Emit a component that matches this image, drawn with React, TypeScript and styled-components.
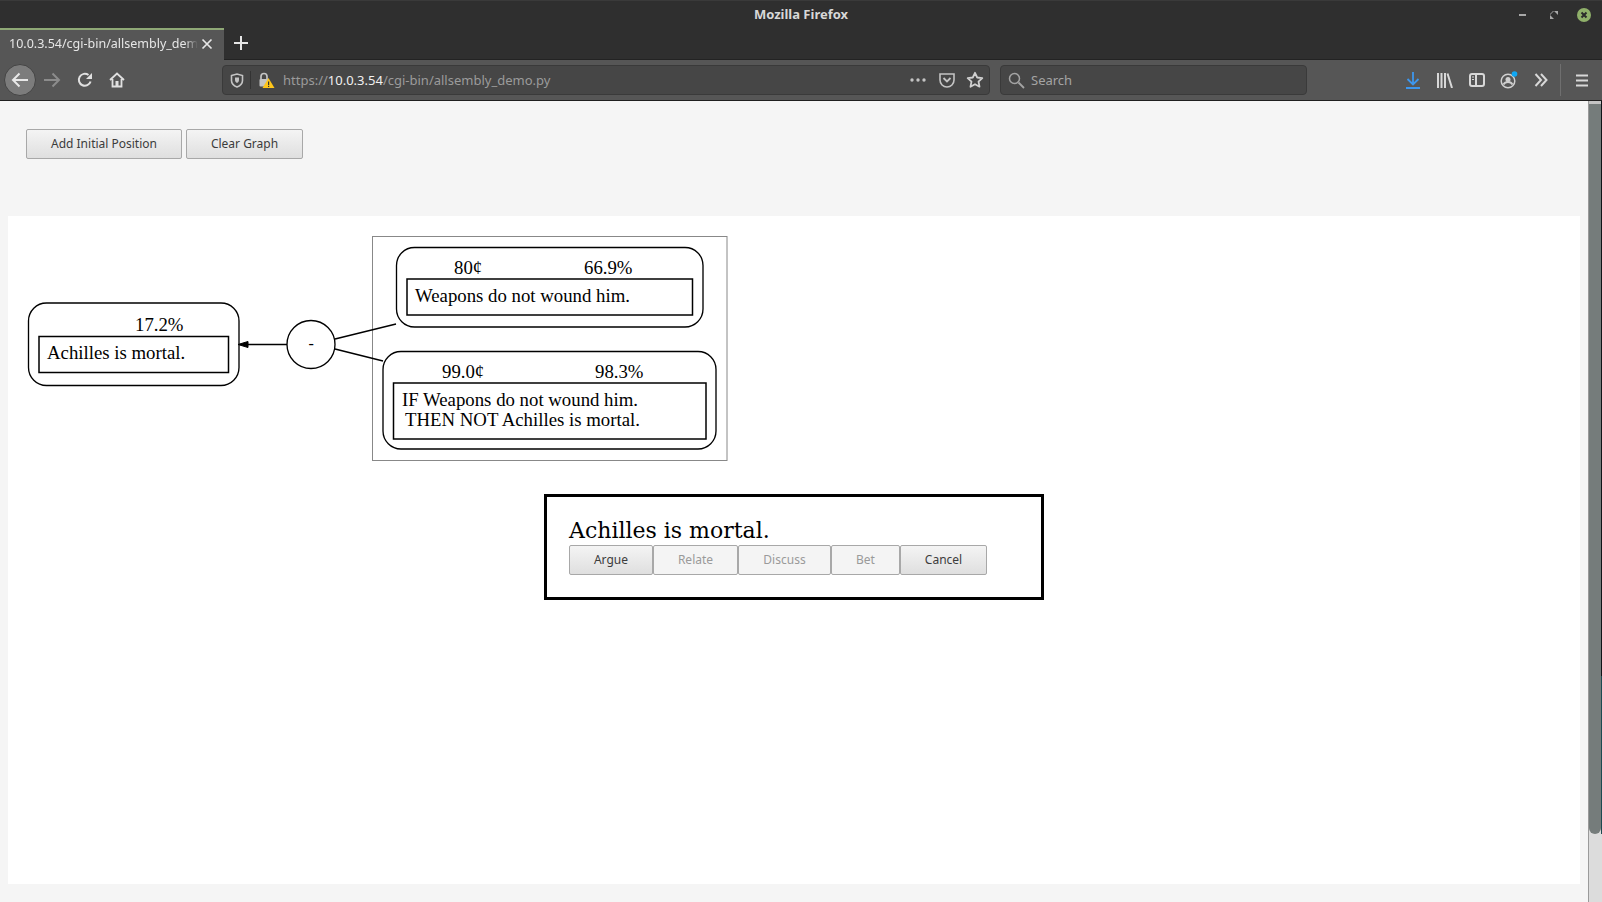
import React from "react";
import styled, { createGlobalStyle } from "styled-components";

const Global = createGlobalStyle`
  html, body { margin: 0; padding: 0; width: 1602px; height: 902px; overflow: hidden; background: #f5f5f5; }
  #root { width: 1602px; height: 902px; }
  * { box-sizing: border-box; }
`;

const UI = `"Noto Sans", "Open Sans", sans-serif`;

const Win = styled.div`display: flex; flex-direction: column; width: 1602px; height: 902px;`;

const TitleBar = styled.div`
  height: 28px; flex: none; background: #2f2f2f; border-top: 1px solid #3a3a3a; padding-bottom: 2px;
  display: flex; align-items: center; justify-content: center; position: relative;
  color: #d8d8d8; font: bold 13px ${UI};
`;
const WinControls = styled.div`
  position: absolute; right: 11px; top: 4px; display: flex; align-items: center; gap: 19px; height: 20px;
`;
const Glyph = styled.svg<{ $mr?: number; $ml?: number }>`
  display: block; flex: none; margin-right: ${p => p.$mr ?? 0}px; margin-left: ${p => p.$ml ?? 0}px;
`;

const TabStrip = styled.div`
  height: 32px; flex: none; background: #2f2f2f; display: flex; align-items: stretch;
  border-bottom: 1px solid #232323;
`;
const Tab = styled.div`
  width: 224px; margin-bottom: -1px; background: #565656; border-top: 2px solid #8fa876; position: relative; z-index: 1;
  display: flex; align-items: center; padding: 0 6px 3px 9px; gap: 3px;
  color: #e6e6e6; font: 12.5px ${UI};
`;
const TabTitle = styled.span`
  width: 189px; white-space: nowrap; overflow: hidden;
  -webkit-mask-image: linear-gradient(to right, #000 176px, transparent 189px);
  mask-image: linear-gradient(to right, #000 176px, transparent 189px);
`;
const NewTab = styled.div`width: 32px; display: flex; align-items: center; justify-content: center; margin-left: 1px; padding-bottom: 2px;`;

const NavBar = styled.div`
  height: 41px; flex: none; background: #565656; border-bottom: 1px solid #1f1f1f;
  display: flex; align-items: center; padding-left: 4px;
`;
const BackBtn = styled.div`
  width: 32px; height: 32px; border-radius: 50%; background: #7c7c7c; border: 1px solid #444;
  display: flex; align-items: center; justify-content: center; flex: none;
`;
const NavIcon = styled.div<{ $w: number; $ml?: number }>`
  width: ${p => p.$w}px; height: 32px; margin-left: ${p => p.$ml ?? 0}px;
  display: flex; align-items: center; justify-content: center; flex: none;
`;
const UrlBar = styled.div`
  width: 768px; height: 30px; margin-left: 90px; background: #464646; border: 1px solid #3a3a3a; border-radius: 4px;
  display: flex; align-items: center; flex: none; font: 13px ${UI}; color: #9a9a9a;
`;
const Sep = styled.div`width: 1px; height: 18px; background: #333; flex: none;`;
const Url = styled.div`flex: 1; margin-left: 4px; white-space: nowrap; color: #9b9b9b;`;
const Host = styled.span`color: #f0f0f0;`;
const SearchBox = styled.div`
  width: 307px; height: 30px; margin-left: 10px; background: #464646; border: 1px solid #3a3a3a; border-radius: 4px;
  display: flex; align-items: center; gap: 6px; padding-left: 7px; flex: none; font: 13px ${UI}; color: #a4a4a4;
`;
const Tools = styled.div`margin-left: 90px; display: flex; align-items: center; height: 100%;`;
const VSep = styled.div`width: 1px; height: 32px; background: #6f6f6f; margin: 0 5px 0 3px; flex: none;`;

const Body = styled.div`flex: 1; display: flex; min-height: 0;`;
const Page = styled.div`flex: 1; display: flex; flex-direction: column; background: #f5f5f5; min-width: 0;`;
const Top = styled.div`height: 115px; flex: none; padding: 28px 0 0 26px; display: flex; gap: 4px; align-items: flex-start;`;
const Btn = styled.div<{ $w: number; $off?: boolean }>`
  width: ${p => p.$w}px; height: 30px; flex: none; border: 1px solid #a8a8a8; border-radius: 2px; padding-bottom: 1px;
  background: ${p => p.$off ? "#f4f4f4" : "linear-gradient(#f4f4f4, #dfdfdf)"};
  color: ${p => p.$off ? "#9a9a9a" : "#3c3c3c"};
  font: 12px ${UI}; display: flex; align-items: center; justify-content: center;
`;
const Canvas = styled.div`
  margin: 0 8px 18px 8px; flex: 1; background: #fff; display: flex; flex-direction: column; align-items: flex-start;
`;
const Graph = styled.svg`display: block; flex: none;`;
const Dialog = styled.div`
  width: 500px; height: 106px; margin: 28px 0 0 536px; border: 3px solid #000; background: #fff;
  padding: 20px 0 0 22px; display: flex; flex-direction: column;
`;
const DlgText = styled.div`font: 22px/28px "DejaVu Serif", serif; color: #000; height: 28px;`;
const BtnRow = styled.div`display: flex;`;

const Scroll = styled.div`
  width: 14px; flex: none; border-left: 1px solid #9a9a9a;
  background:
    linear-gradient(to bottom, #101518 0 575px, #1d4a50 575px 733px, #dcdcdc 733px) right / 1px 100% no-repeat,
    #dcdcdc;
`;
const Thumb = styled.div`
  width: 12px; height: 733px; background: #757c7b; border-radius: 0 0 6px 6px; border-top: 3px solid #c4c4c4;
`;

const NODE = `"Liberation Serif", serif`;
const GT = styled.text`font: 18.8px ${NODE}; fill: #000;`;
const Dash = styled.text`font: 16px ${NODE}; fill: #000;`;

const ico = { fill: "none", stroke: "#e0e0e0", strokeWidth: 2 };

export default function App() {
  return (
    <Win>
      <Global />
      <TitleBar>
        Mozilla Firefox
        <WinControls>
          <Glyph width="8" height="4" $mr={4}><rect y="1" width="7" height="2" fill="#a8a8a8" /></Glyph>
          <Glyph width="8" height="8"><path d="M0 4v4h4zM4 0h4v4zM0 3L3 0h1L0 4z" fill="#a8a8a8" /></Glyph>
          <Glyph width="14" height="14" viewBox="0 0 14 14">
            <circle cx="7" cy="7" r="7" fill="#8fb06a" />
            <path d="M4.5 4.5l5 5M9.5 4.5l-5 5" stroke="#2b2b2b" strokeWidth="2" />
          </Glyph>
        </WinControls>
      </TitleBar>
      <TabStrip>
        <Tab>
          <TabTitle>10.0.3.54/cgi-bin/allsembly_demo.py</TabTitle>
          <svg width="12" height="12" viewBox="0 0 12 12"><path d="M1.5 1.5l9 9M10.5 1.5l-9 9" stroke="#e6e6e6" strokeWidth="1.7" /></svg>
        </Tab>
        <NewTab>
          <svg width="14" height="14" viewBox="0 0 14 14"><path d="M7 0v14M0 7h14" stroke="#e6e6e6" strokeWidth="2" /></svg>
        </NewTab>
      </TabStrip>
      <NavBar>
        <BackBtn>
          <svg width="18" height="16" viewBox="0 0 18 16"><path d="M17 8H2M8.5 1.5L2 8l6.5 6.500" fill="none" stroke="#e8e8e8" strokeWidth="2" /></svg>
        </BackBtn>
        <NavIcon $w={32}>
          <svg width="18" height="16" viewBox="0 0 18 16"><path d="M1 8h15M9.500 1.500L16 8l-6.500 6.500" fill="none" stroke="#8c8c8c" strokeWidth="2" /></svg>
        </NavIcon>
        <NavIcon $w={34}>
          <svg width="16" height="16" viewBox="0 0 16 16"><path d="M13.600 9.500A6 6 0 1 1 11.500 3" {...ico} /><path d="M15 1v6H9z" fill="#e0e0e0" /></svg>
        </NavIcon>
        <NavIcon $w={30}>
          <svg width="16" height="16" viewBox="0 0 16 16"><path d="M1 8l7-6.500L15 8M3.500 7v7.500h9V7" {...ico} strokeWidth={1.8} /><rect x="6.500" y="9" width="3" height="5.500" fill="#e0e0e0" /></svg>
        </NavIcon>
        <UrlBar>
          <NavIcon $w={27}>
            <svg width="14" height="15" viewBox="0 0 14 15"><path d="M1.500 2.500L7 1l5.500 1.500v5C12.500 11 9.500 13 7 14 4.500 13 1.500 11 1.500 7.500z" fill="none" stroke="#c4c4c4" strokeWidth="1.6" /><path d="M5 4.500h4V7c0 1.500-1 2.500-2 3-1-.5-2-1.500-2-3z" fill="#c4c4c4" /></svg>
          </NavIcon>
          <Sep />
          <NavIcon $w={26} $ml={2}>
            <svg width="18" height="18" viewBox="0 0 18 18"><path d="M4 8V5.500a3 3 0 0 1 6 0V8" fill="none" stroke="#c4c4c4" strokeWidth="1.700" /><rect x="2.500" y="8" width="9" height="7.500" rx="1" fill="#c4c4c4" /><path d="M11.500 7L17.500 17H5.500z" fill="#ffc61a" /><rect x="11" y="10.500" width="1.200" height="3.500" fill="#333" /><rect x="11" y="14.800" width="1.200" height="1.200" fill="#333" /></svg>
          </NavIcon>
          <Url>https://<Host>10.0.3.54</Host>/cgi-bin/allsembly_demo.py</Url>
          <Glyph width="16" height="4" viewBox="0 0 16 4" $mr={13}><circle cx="2" cy="2" r="1.700" fill="#c4c4c4" /><circle cx="8" cy="2" r="1.700" fill="#c4c4c4" /><circle cx="14" cy="2" r="1.700" fill="#c4c4c4" /></Glyph>
          <Glyph width="16" height="16" viewBox="0 0 16 16" $mr={11}><path d="M1 2h14v6a7 7 0 0 1-14 0z" fill="none" stroke="#c4c4c4" strokeWidth="1.600" /><path d="M4.500 6L8 9.500 11.500 6" fill="none" stroke="#c4c4c4" strokeWidth="1.800" /></Glyph>
          <Glyph width="18" height="18" viewBox="0 0 18 18" $mr={5}><path d="M9 1.800l2.200 4.700 5.100.6-3.800 3.500 1 5.100L9 13.200l-4.500 2.500 1-5.100L1.700 7.100l5.100-.6z" fill="none" stroke="#d0d0d0" strokeWidth="1.800" strokeLinejoin="round" /></Glyph>
        </UrlBar>
        <SearchBox>
          <svg width="17" height="17" viewBox="0 0 17 17"><circle cx="6.500" cy="6.500" r="5" fill="none" stroke="#a4a4a4" strokeWidth="1.500" /><path d="M10.500 10.500L16 16" stroke="#a4a4a4" strokeWidth="1.800" /></svg>
          Search
        </SearchBox>
        <Tools>
          <NavIcon $w={32}>
            <svg width="14" height="17" viewBox="0 0 14 17"><path d="M7 0v12M1.500 7L7 12.500 12.500 7" fill="none" stroke="#3d97ee" strokeWidth="1.800" /><rect y="15" width="14" height="2" fill="#3d97ee" /></svg>
          </NavIcon>
          <NavIcon $w={32}>
            <svg width="16" height="15" viewBox="0 0 16 15"><path d="M1 0v15M4.500 0v15M8 0v15M10.500 .5l4.500 14.500" fill="none" stroke="#d8d8d8" strokeWidth="2" /></svg>
          </NavIcon>
          <NavIcon $w={32}>
            <svg width="16" height="14" viewBox="0 0 16 14"><rect x="1" y="1" width="14" height="12" rx="2" fill="none" stroke="#d8d8d8" strokeWidth="2" /><rect x="6" y="1" width="2" height="12" fill="#d8d8d8" /><path d="M3 4h2M3 6.500h2" stroke="#d8d8d8" /></svg>
          </NavIcon>
          <NavIcon $w={32}>
            <svg width="18" height="18" viewBox="0 0 18 18"><circle cx="8" cy="10" r="6.800" fill="none" stroke="#d0d0d0" strokeWidth="1.500" /><circle cx="8" cy="8.500" r="2.500" fill="#d0d0d0" /><path d="M3.500 13.500c1-2 2.500-2.500 4.500-2.500s3.500.5 4.500 2.500" fill="none" stroke="#d0d0d0" strokeWidth="1.800" /><circle cx="14.500" cy="3" r="2.800" fill="#0fa8f5" /></svg>
          </NavIcon>
          <NavIcon $w={32}>
            <svg width="14" height="14" viewBox="0 0 14 14"><path d="M1.500 1L7 7l-5.500 6M7 1l5.500 6L7 13" fill="none" stroke="#d8d8d8" strokeWidth="2" /></svg>
          </NavIcon>
          <VSep />
          <NavIcon $w={32}>
            <svg width="12" height="13" viewBox="0 0 12 13"><path d="M0 1.500h12M0 6.500h12M0 11.500h12" stroke="#d8d8d8" strokeWidth="2" /></svg>
          </NavIcon>
        </Tools>
      </NavBar>
      <Body>
        <Page>
          <Top>
            <Btn $w={156}>Add Initial Position</Btn>
            <Btn $w={117}>Clear Graph</Btn>
          </Top>
          <Canvas>
            <Graph width="760" height="250" viewBox="8 216 760 250">
              <g fill="none" stroke="#000">
                <rect x="372.500" y="236.500" width="354.500" height="224" stroke="#888" />
                <g strokeWidth="1.330">
                  <rect x="28.500" y="303" width="210.500" height="82.500" rx="18" />
                  <rect x="39" y="336.500" width="189.500" height="36" strokeWidth="1.500" />
                  <circle cx="311" cy="344.500" r="24" />
                  <path d="M287 344.500H247" />
                  <path d="M335 339L396 324M335 349L383 361" />
                  <rect x="396.500" y="247.500" width="306.500" height="79.500" rx="18" />
                  <rect x="407" y="279" width="285.500" height="36" strokeWidth="1.500" />
                  <rect x="383" y="351.500" width="333" height="97.500" rx="18" />
                  <rect x="393.500" y="383" width="312.500" height="56" strokeWidth="1.500" />
                </g>
                <path d="M248 341.500L238 344.500L248 347.500z" fill="#000" />
              </g>
              <GT x="135" y="331">17.2%</GT>
              <GT x="47" y="359">Achilles is mortal.</GT>
              <Dash x="308.500" y="349">-</Dash>
              <GT x="454" y="274">80¢</GT>
              <GT x="584" y="274">66.9%</GT>
              <GT x="415" y="302">Weapons do not wound him.</GT>
              <GT x="442" y="378">99.0¢</GT>
              <GT x="595" y="378">98.3%</GT>
              <GT x="402" y="406">IF Weapons do not wound him.</GT>
              <GT x="405" y="426">THEN NOT Achilles is mortal.</GT>
            </Graph>
            <Dialog>
              <DlgText>Achilles is mortal.</DlgText>
              <BtnRow>
                <Btn $w={84}>Argue</Btn>
                <Btn $w={85} $off>Relate</Btn>
                <Btn $w={93} $off>Discuss</Btn>
                <Btn $w={69} $off>Bet</Btn>
                <Btn $w={87}>Cancel</Btn>
              </BtnRow>
            </Dialog>
          </Canvas>
        </Page>
        <Scroll><Thumb /></Scroll>
      </Body>
    </Win>
  );
}
